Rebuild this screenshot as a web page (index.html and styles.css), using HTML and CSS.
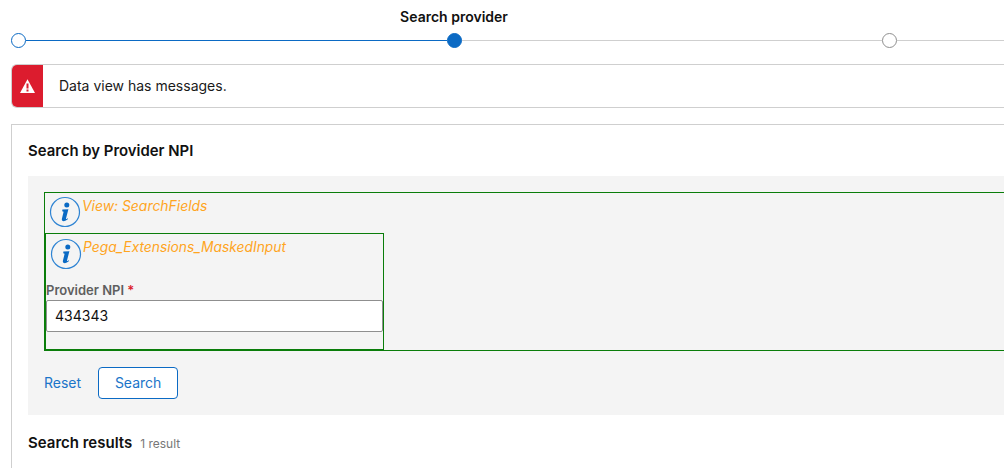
FILE: index.html
```html
<!DOCTYPE html>
<html>
<head>
    <meta charset="UTF-8">
    <title>Search provider</title>
    <link rel="stylesheet" href="styles.css">
</head>
<body>
    <div class="page">
        <div class="step-title">Search provider</div>
        <div class="stepper">
            <span class="dot dot-done"></span>
            <span class="line line-done"></span>
            <span class="dot dot-current"></span>
            <span class="line line-todo"></span>
            <span class="dot"></span>
            <span class="line line-end"></span>
        </div>

        <div class="banner">
            <div class="banner-icon">
                <svg width="15" height="14" viewBox="0 0 15 14">
                    <path d="M7.5 0.2 L15 14 L0 14 Z" fill="#fff"/>
                    <rect x="6.5" y="4.5" width="2" height="5" fill="#dc1c2e"/>
                    <rect x="6.5" y="10.5" width="2" height="2" fill="#dc1c2e"/>
                </svg>
            </div>
            <div class="banner-text">Data view has messages.</div>
        </div>

        <div class="card">
            <h2>Search by Provider NPI</h2>
            <div class="search-box">
                <div class="debug-view">
                    <div class="debug-head">
                        <svg class="info" width="32" height="32" viewBox="0 0 32 32">
                            <circle cx="16" cy="16" r="14.5" fill="none" stroke="#2f84d3" stroke-width="1.2"/>
                            <circle cx="17.8" cy="9" r="2.5" fill="#0b6ac4"/>
                            <path d="M13.4 13.6 L19.4 13.2 L17 22.4 Q16.8 23.4 17.6 23 L18.8 22.3 L19.1 23.1 Q16.8 25.2 14.8 25.2 Q12.4 25.2 12.9 22.8 L14.6 15.8 L13.2 15.2 Z" fill="#0b6ac4"/>
                        </svg>
                        <span class="debug-label">View: SearchFields</span>
                    </div>
                    <div class="debug-field">
                        <div class="debug-head debug-head-inner">
                            <svg class="info" width="32" height="32" viewBox="0 0 32 32">
                                <circle cx="16" cy="16" r="14.5" fill="none" stroke="#2f84d3" stroke-width="1.2"/>
                                <circle cx="17.8" cy="9" r="2.5" fill="#0b6ac4"/>
                                <path d="M13.4 13.6 L19.4 13.2 L17 22.4 Q16.8 23.4 17.6 23 L18.8 22.3 L19.1 23.1 Q16.8 25.2 14.8 25.2 Q12.4 25.2 12.9 22.8 L14.6 15.8 L13.2 15.2 Z" fill="#0b6ac4"/>
                            </svg>
                            <span class="debug-label">Pega_Extensions_MaskedInput</span>
                        </div>
                        <label class="field-label">Provider NPI <span class="required">*</span></label>
                        <input class="field-input" type="text" value="434343">
                    </div>
                </div>
                <div class="actions">
                    <a class="reset-link">Reset</a>
                    <button class="search-btn">Search</button>
                </div>
            </div>
            <div class="results-head">
                <h3>Search results</h3>
                <span class="results-count">1 result</span>
            </div>
        </div>
    </div>
</body>
</html>
```

FILE: styles.css
```css
* {
    margin: 0;
    padding: 0;
    box-sizing: border-box;
    font-family: 'Inter', sans-serif;
}

html, body {
    background: white;
    overflow: hidden;
    height: 468px;
}

.page {
    width: 1100px;
    padding-left: 11px;
}

.step-title {
    width: 886px;
    padding-top: 8px;
    height: 32px;
    line-height: 18px;
    text-align: center;
    font-size: 14px;
    font-weight: 600;
    color: #111;
}

.stepper {
    display: flex;
    align-items: center;
    height: 16px;
    margin-bottom: 16px;
}

.dot {
    flex: none;
    width: 15px;
    height: 15px;
    border-radius: 50%;
    border: 1px solid #8f8f8f;
    background: white;
}

.dot-done {
    border-color: #0b6ac4;
}

.dot-current {
    background: #0b6ac4;
    border-color: #0b6ac4;
}

.line {
    flex: none;
    width: 421px;
    height: 1px;
    background: #cfcfcf;
}

.line-done {
    background: #0b6ac4;
}

.line-todo {
    width: 420px;
}

.line-end {
    width: 200px;
}

.banner {
    display: flex;
    align-items: center;
    height: 44px;
    border: 1px solid #cfcfcf;
    border-right: none;
    border-radius: 6px 0 0 6px;
}

.banner-icon {
    width: 31px;
    height: 42px;
    display: flex;
    align-items: center;
    justify-content: center;
    background: #dc1c2e;
    border-radius: 5px 0 0 5px;
}

.banner-text {
    margin-left: 16px;
    padding-bottom: 2px;
    font-size: 14px;
    color: #1a1a1a;
}

.card {
    margin-top: 16px;
    border-top: 1px solid #cfcfcf;
    border-left: 1px solid #cfcfcf;
    padding: 16px;
    height: 360px;
}

h2 {
    font-size: 14.9px;
    font-weight: 600;
    line-height: 20px;
    color: #111;
    margin-bottom: 15px;
}

.search-box {
    background: #f4f4f4;
    padding: 16px;
    height: 239px;
}

.debug-view {
    height: 159px;
    border: 1px solid #0a7d0a;
}

.debug-head {
    display: flex;
    height: 40px;
    padding: 3px 0 0 4px;
}

.debug-head-inner {
    height: 46px;
    padding: 4px 0 0 4px;
}

.info {
    flex: none;
}

.debug-label {
    margin-left: 1px;
    font-size: 13.9px;
    line-height: 18px;
    font-style: italic;
    color: #ffa51f;
}

.debug-head .debug-label {
    margin-top: 1px;
}

.debug-head-inner .debug-label {
    margin-top: 0;
    font-size: 13.8px;
}

.debug-field {
    width: 340px;
    height: 117px;
    border: 1px solid #0a7d0a;
    border-left-width: 2px;
    margin-left: -1px;
}

.field-label {
    display: block;
    height: 20px;
    font-size: 13px;
    line-height: 20px;
    font-weight: 600;
    color: #5f5f5f;
}

.required {
    color: #dc1c2e;
}

.field-input {
    display: block;
    width: 337px;
    height: 32px;
    padding: 0 8px 2px;
    border: 1px solid #8f8f8f;
    border-radius: 2px;
    background: white;
    font-size: 14px;
    color: #111;
}

.actions {
    display: flex;
    align-items: center;
    gap: 17px;
    margin-top: 16px;
}

.reset-link {
    padding-bottom: 2px;
    font-size: 14px;
    color: #1b75c9;
}

.search-btn {
    width: 80px;
    height: 32px;
    padding-bottom: 2px;
    border: 1px solid #0b6ac4;
    border-radius: 4px;
    background: white;
    font-size: 14px;
    color: #1b75c9;
}

.results-head {
    display: flex;
    align-items: baseline;
    gap: 8px;
    margin-top: 18px;
}

h3 {
    font-size: 15px;
    font-weight: 600;
    line-height: 20px;
    color: #111;
}

.results-count {
    font-size: 12px;
    color: #777;
}
```
